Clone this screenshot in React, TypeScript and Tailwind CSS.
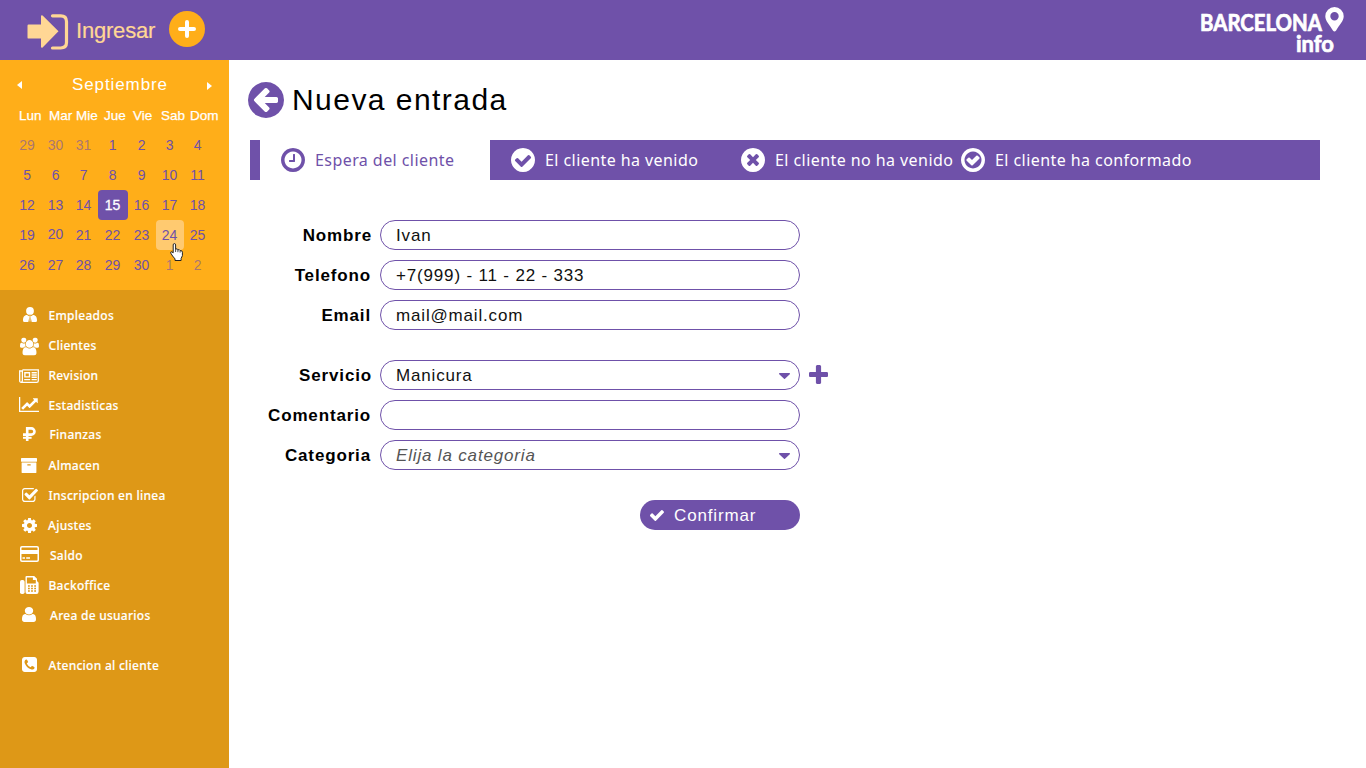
import type { ReactNode } from "react";

type GlyphProps = { d: string; box: string; className: string };

const Glyph = ({ d, box, className }: GlyphProps) => (
  <svg viewBox={box} className={`shrink-0 ${className}`} fill="currentColor" preserveAspectRatio="none" aria-hidden="true">
    <path d={d} />
  </svg>
);

const DISC = "q0 209-103 385.5t-279.5 279.5-385.5 103-385.5-103-279.5-279.5-103-385.5 103-385.5 279.5-279.5 385.5-103 385.5 103 279.5 279.5 103 385.5z";
const RING = "q0-148-73-273t-198-198-273-73-273 73-198 198-73 273 73 273 198 198 273 73 273-73 198-198 73-273zm224 0" + DISC;
const ROUND_BOX = "128 128 1536 1536";

const paths = {
  arrowLeft: "M1408 960v-128q0-26-19-45t-45-19h-502l189-189q19-19 19-45t-19-45l-91-91q-18-18-45-18t-45 18l-362 362-91 91q-18 18-18 45t18 45l91 91 362 362q18 18 45 18t45-18l91-91q18-18 18-45t-18-45l-189-189h502q26 0 45-19t19-45zm256-64" + DISC,
  clock: "M1024 544v448q0 14-9 23t-23 9h-320q-14 0-23-9t-9-23v-64q0-14 9-23t23-9h224v-352q0-14 9-23t23-9h64q14 0 23 9t9 23zm416 352" + RING,
  checkCircle: "M1412 734q0-28-18-46l-91-90q-19-19-45-19t-45 19l-408 407-226-226q-19-19-45-19t-45 19l-91 90q-18 18-18 46 0 27 18 45l362 362q19 19 45 19 27 0 46-19l543-543q18-18 18-45zm252 162" + DISC,
  timesCircle: "M1277 1122q0-26-19-45l-181-181 181-181q19-19 19-45 0-27-19-46l-90-90q-19-19-46-19-26 0-45 19l-181 181-181-181q-19-19-45-19-27 0-46 19l-90 90q-19 19-19 46 0 26 19 45l181 181-181 181q-19 19-19 45 0 27 19 46l90 90q19 19 46 19 26 0 45-19l181-181 181 181q19 19 45 19 27 0 46-19l90-90q19-19 19-46zm387-226" + DISC,
  checkRing: "M1299 813l-422 422q-19 19-45 19t-45-19l-294-294q-19-19-19-45t19-45l102-102q19-19 45-19t45 19l147 147 275-275q19-19 45-19t45 19l102 102q19 19 19 45t-19 45zm141 83" + RING,
  caretDown: "M1408 704q0 26-19 45l-448 448q-19 19-45 19t-45-19l-448-448q-19-19-19-45t19-45 45-19h896q26 0 45 19t19 45z",
  plus: "M1600 736v192q0 40-28 68t-68 28h-416v416q0 40-28 68t-68 28h-192q-40 0-68-28t-28-68v-416h-416q-40 0-68-28t-28-68v-192q0-40 28-68t68-28h416v-416q0-40 28-68t68-28h192q40 0 68 28t28 68v416h416q40 0 68 28t28 68z",
  check: "M1671 566q0 40-28 68l-724 724-136 136q-28 28-68 28t-68-28l-136-136-362-362q-28-28-28-68t28-68l136-136q28-28 68-28t68 28l294 295 656-657q28-28 68-28t68 28l136 136q28 28 28 68z",
  users: "M657 896q-162 5-265 128h-134q-82 0-138-40.5t-56-118.5q0-353 124-353 6 0 43.5 21t97.5 42.5 119 21.5q67 0 133-23-5 37-5 66 0 139 81 256zm1071 637q0 120-73 189.5t-194 69.5h-874q-121 0-194-69.5t-73-189.5q0-53 3.5-103.5t14-109 26.5-108.5 43-97.5 62-81 85.5-53.5 111.5-20q10 0 43 21.5t73 48 107 48 135 21.5 135-21.5 107-48 73-48 43-21.5q61 0 111.5 20t85.5 53.5 62 81 43 97.5 26.5 108.5 14 109 3.5 103.5zm-1024-1277q0 106-75 181t-181 75-181-75-75-181 75-181 181-75 181 75 75 181zm704 384q0 159-112.5 271.5t-271.5 112.5-271.5-112.5-112.5-271.5 112.5-271.5 271.5-112.5 271.5 112.5 112.5 271.5zm576 225q0 78-56 118.5t-138 40.5h-134q-103-123-265-128 81-117 81-256 0-29-5-66 66 23 133 23 59 0 119-21.5t97.5-42.5 43.5-21q124 0 124 353zm-128-609q0 106-75 181t-181 75-181-75-75-181 75-181 181-75 181 75 75 181z",
  chart: "M2048 1536v128h-2048v-1536h128v1408h1920zm-128-1248v435q0 21-19.5 29.5t-35.5-7.5l-121-121-633 633q-10 10-23 10t-23-10l-233-233-416 416-192-192 585-585q10-10 23-10t23 10l233 233 464-464-121-121q-16-16-7.5-35.5t29.5-19.5h435q14 0 23 9t9 23z",
  archive: "M1088 832q0-26-19-45t-45-19h-256q-26 0-45 19t-19 45 19 45 45 19h256q26 0 45-19t19-45zm576-192v960q0 26-19 45t-45 19h-1408q-26 0-45-19t-19-45v-960q0-26 19-45t45-19h1408q26 0 45 19t19 45zm64-448v256q0 26-19 45t-45 19h-1536q-26 0-45-19t-19-45v-256q0-26 19-45t45-19h1536q26 0 45 19t19 45z",
  checkSquare: "M1472 930v318q0 119-84.5 203.5t-203.5 84.5h-832q-119 0-203.5-84.5t-84.5-203.5v-832q0-119 84.5-203.5t203.5-84.5h832q63 0 117 25 15 7 18 23 3 17-9 29l-49 49q-10 10-23 10-3 0-9-2-23-6-45-6h-832q-66 0-113 47t-47 113v832q0 66 47 113t113 47h832q66 0 113-47t47-113v-254q0-13 9-22l64-64q10-10 23-10 6 0 12 3 20 8 20 29zm231-489l-814 814q-24 24-57 24t-57-24l-430-430q-24-24-24-57t24-57l110-110q24-24 57-24t57 24l263 263 647-647q24-24 57-24t57 24l110 110q24 24 24 57t-24 57z",
  cog: "M1152 896q0-106-75-181t-181-75-181 75-75 181 75 181 181 75 181-75 75-181zm512-109v222q0 12-8 23t-20 13l-185 28q-19 54-39 91 35 50 107 138 10 12 10 25t-9 23q-27 37-99 108t-94 71q-12 0-26-9l-138-108q-44 23-91 38-16 136-29 186-7 28-36 28h-222q-14 0-24.5-8.5t-11.5-21.5l-28-184q-49-16-90-37l-141 107q-10 9-25 9-14 0-25-11-126-114-165-168-7-10-7-23 0-12 8-23 15-21 51-66.5t54-70.5q-27-50-41-99l-183-27q-13-2-21-12.5t-8-23.5v-222q0-12 8-23t19-13l186-28q14-46 39-92-40-57-107-138-10-12-10-24 0-10 9-23 26-36 98.5-107.5t94.5-71.5q13 0 26 10l138 107q44-23 91-38 16-136 29-186 7-28 36-28h222q14 0 24.5 8.5t11.5 21.5l28 184q49 16 90 37l142-107q9-9 24-9 13 0 25 10 129 119 165 170 7 8 7 22 0 12-8 23-15 21-51 66.5t-54 70.5q26 50 41 98l183 28q13 2 21 12.5t8 23.5z",
  user: "M1536 1399q0 109-62.5 187t-150.5 78h-854q-88 0-150.5-78t-62.5-187q0-85 8.5-160.5t31.5-152 58.5-131 94-89 134.5-34.5q131 128 313 128t313-128q76 0 134.5 34.5t94 89 58.5 131 31.5 152 8.5 160.5zm-256-887q0 159-112.5 271.5t-271.5 112.5-271.5-112.5-112.5-271.5 112.5-271.5 271.5-112.5 271.5 112.5 112.5 271.5z",
  phone: "M1408 1193q0-11-2-16t-18-16.5-40.5-25-47.5-26.5-45.5-25-28.5-15q-5-3-19-13t-25-15-21-5q-15 0-36.5 20.5t-39.5 45-38.5 45-33.5 20.5q-7 0-16.5-3.5t-15.5-6.5-17-9.5-14-8.5q-99-55-170-126.5t-127-170.5q-2-3-8.5-14t-9.5-17-6.5-15.5-3.5-16.5q0-13 20.5-33.5t45-38.5 45-39.5 20.5-36.5q0-10-5-21t-15-25-13-19q-3-6-15-28.5t-25-45.5-26.5-47.5-25-40.5-16.5-18-16-2q-48 0-101 22-46 21-80 94.5t-34 130.5q0 16 2.5 34t5 30.5 9 33 10 29.5 12.5 33 11 30q60 164 216.5 320.5t320.5 216.5q6 2 30 11t33 12.5 29.5 10 33 9 30.5 5 34 2.5q57 0 130.5-34t94.5-80q22-53 22-101zm256-777v960q0 119-84.5 203.5t-203.5 84.5h-960q-119 0-203.5-84.5t-84.5-203.5v-960q0-119 84.5-203.5t203.5-84.5h960q119 0 203.5 84.5t84.5 203.5z",
};

const Employee = () => (
  <svg viewBox="0 0 14 15" className="ml-px h-[15px] w-[14px] -translate-y-px" fill="currentColor" aria-hidden="true">
    <circle cx="7" cy="3.9" r="3.9" />
    <path d="M4 8 6.5 9.6 5.3 15H1.4Q0 15 0 13.4C0 10.4 1.2 8 4 8zM10 8 7.5 9.6 8.7 15h3.9q1.4 0 1.4-1.6C14 10.4 12.8 8 10 8z" />
    <path d="M6.2 8.6h1.6L7.6 14l-.6 1-.6-1z" opacity=".6" />
  </svg>
);

const Newspaper = () => (
  <svg viewBox="0 0 20 14" className="h-[14px] w-5 translate-y-px" fill="none" stroke="currentColor" aria-hidden="true">
    <path strokeWidth="1.3" d="M3.4.8h15.9v10.9q0 1.6-1.6 1.6H2.3Q.7 13.3.7 11.7V2h2.7v9.7q0 1.4-1.3 1.5" />
    <path strokeWidth="1.4" d="M5.9 3.7h4.6v4.2H5.9zM5.2 10.6h6M12.6 3.7h5.2M12.6 6h5.2M12.6 8.3h5.2M12.6 10.6h5.2" />
  </svg>
);

const Ruble = () => (
  <svg viewBox="0 0 13 14" className="ml-px h-[14px] w-[13px] -translate-y-px" fill="none" stroke="currentColor" aria-hidden="true">
    <path strokeWidth="2.6" d="M4.2 14V1.4h4.2a3 3 0 0 1 0 6.2H0" />
    <path strokeWidth="2" d="M0 10.8h8.6" />
  </svg>
);

const Card = () => (
  <svg viewBox="0 0 19 16" className="h-4 w-[19px] -translate-y-px" fill="currentColor" aria-hidden="true">
    <rect x=".75" y=".75" width="17.5" height="14.5" rx="1.2" fill="none" stroke="currentColor" strokeWidth="1.5" />
    <path d="M1 4h17v4H1zM2.5 11.3H5v1.5H2.5zM6.2 11.3H10v1.5H6.2z" />
  </svg>
);

const Fax = () => (
  <svg viewBox="0 0 19 18" className="h-[18px] w-[19px]" fill="currentColor" aria-hidden="true">
    <rect x="0" y="4" width="4.6" height="14" rx="1.8" />
    <path
      fillRule="evenodd"
      d="M5.5 1q0-1 1-1h7.7L17 2.8v2.4q1.6.5 1.6 2v8.3q0 2.5-2.2 2.5h-9q-1.9 0-1.9-2zM6.9 1.4v6h8.9V4.1h-2.9V1.4zM8 9.2v1.5h1.8V9.2zM11.1 9.2v1.5h1.8V9.2zM14.2 9.2v1.5H16V9.2zM8 11.8v1.5h1.8v-1.5zM11.1 11.8v1.5h1.8v-1.5zM14.2 11.8v1.5H16v-1.5zM8 14.3v1.5h1.8v-1.5zM11.1 14.3v1.5h1.8v-1.5zM14.2 14.3v1.5H16v-1.5z"
    />
  </svg>
);

type MenuItem = { label: string; icon: ReactNode; text: string; row?: string };

const menu: MenuItem[] = [
  { label: "Empleados", icon: <Employee />, text: "pl-[9.5px] pt-[2px]" },
  { label: "Clientes", icon: <Glyph d={paths.users} box="64 0 1920 1792" className="h-[18px] w-[19px] translate-y-[1.5px]" />, text: "pl-[9.5px] pt-[2px]" },
  { label: "Revision", icon: <Newspaper />, text: "pl-[9.5px] pt-[2px]" },
  { label: "Estadisticas", icon: <Glyph d={paths.chart} box="0 128 2048 1536" className="h-[15px] w-5 -translate-y-px" />, text: "pl-[9.5px] pt-[2px]" },
  { label: "Finanzas", icon: <Ruble />, text: "pl-[10.5px]" },
  { label: "Almacen", icon: <Glyph d={paths.archive} box="64 128 1664 1536" className="h-[15px] w-4" />, text: "pl-[9.5px] pt-[2px]" },
  { label: "Inscripcion en linea", icon: <Glyph d={paths.checkSquare} box="64 128 1664 1408" className="ml-[2px] h-[14px] w-4" />, text: "pl-[9.5px] pt-[2px]" },
  { label: "Ajustes", icon: <Glyph d={paths.cog} box={ROUND_BOX} className="ml-px h-[15px] w-[15px]" />, text: "pl-[9px] pt-[2px]" },
  { label: "Saldo", icon: <Card />, text: "pl-[11px] pt-[2px]" },
  { label: "Backoffice", icon: <Fax />, text: "pl-[9.5px] pt-[2px]" },
  { label: "Area de usuarios", icon: <Glyph d={paths.user} box="256 128 1280 1536" className="h-[15px] w-[14px] -translate-y-px" />, text: "pl-[11px] pt-[2px]" },
  { label: "Atencion al cliente", icon: <Glyph d={paths.phone} box={ROUND_BOX} className="h-[15px] w-[15px] -translate-y-px" />, text: "pl-[9.5px] pt-[2px]", row: "mt-5" },
];

const weeks = [
  [29, 30, 31, 1, 2, 3, 4],
  [5, 6, 7, 8, 9, 10, 11],
  [12, 13, 14, 15, 16, 17, 18],
  [19, 20, 21, 22, 23, 24, 25],
  [26, 27, 28, 29, 30, 1, 2],
];

function dayStyle(day: number, week: number) {
  if (day === 15) return "rounded bg-[#6f51a9] pt-px text-white [-webkit-text-stroke:0.3px_white]";
  if (day === 24) return "rounded bg-[#ffca70] pt-px text-[#6f51a9]";
  if (day === 20) return "pb-px text-[#6f51a9]";
  if ((week === 0 && day > 20) || (week === 4 && day < 10)) return "pt-px text-[#6f51a9]/60";
  return "pt-px text-[#6f51a9]";
}

const Pointer = () => (
  <svg viewBox="0 0 14 18" className="absolute top-[243px] left-[170px] h-[18px] w-[14px]" aria-hidden="true">
    <path
      d="M3.2 9.8V1.9Q3.2.6 4.4.6t1.2 1.3V6q2-.6 2.3.8 1.7-.6 2.2.8 2.2-.4 2.3 1.6v3.5l-1.3 2.8v2H5v-1.6L2.6 13 .8 10.2Q.4 8.7 1.6 8.7z"
      fill="#fff"
      stroke="#222"
      strokeWidth="1"
    />
    <path d="M5.6 6v3M7.9 7v2.2M10.1 7.8v1.8" stroke="#222" strokeWidth=".8" />
  </svg>
);

const Header = () => (
  <header className="flex h-[60px] shrink-0 items-center bg-[#6f51a9]">
    <svg viewBox="0 0 42 36" className="mt-[3px] ml-[27px] h-9 w-[42px]" aria-hidden="true">
      <path d="M1.6 10.5H14V2q.3-1.4 1.6-.5L31.5 17.3 15.6 33.4q-1.3.8-1.6-.6v-8.2H1.6Q.5 24.6.5 23.4V11.8q0-1.3 1.1-1.3z" fill="#ffd795" />
      <path d="M25.5 1.8h8.2q5.8 0 5.8 5.8v21q0 5.4-5.8 5.4h-8.2" fill="none" stroke="#ffd795" strokeWidth="3.2" strokeLinecap="round" />
    </svg>
    <span className="ml-[7px] w-[93px] text-[22px] tracking-[-0.2px] text-[#ffd795] [-webkit-text-stroke:0.2px_#ffd795]">Ingresar</span>
    <button className="-mt-[2px] flex h-9 w-9 items-center justify-center rounded-full bg-[#ffae19] text-white">
      <svg viewBox="0 0 18 18" className="h-[18px] w-[18px]" stroke="currentColor" strokeWidth="4" strokeLinecap="round" aria-hidden="true">
        <path d="M9 2v14M2 9h14" />
      </svg>
    </button>
    <svg viewBox="0 0 150 60" className="ml-auto mr-[16px] h-[60px] w-[150px]" fill="#fff" aria-label="BARCELONA info">
      <text fontFamily="Lato, sans-serif" fontWeight="700" fontSize="22" stroke="#fff" strokeWidth="0.7" strokeLinejoin="round">
        <tspan x="0" y="30.5" textLength="122" lengthAdjust="spacingAndGlyphs">BARCELONA</tspan>
        <tspan x="96" y="51.5" textLength="38" lengthAdjust="spacingAndGlyphs">info</tspan>
      </text>
      <path fillRule="evenodd" d="M134.5 7a9.2 9.2 0 0 1 9.2 9.2c0 5-4.4 8.4-7.6 14.2q-1.6 2-3.2 0c-3.2-5.8-7.6-9.2-7.6-14.2A9.2 9.2 0 0 1 134.5 7zM134.5 12a4.2 4.2 0 1 0 0 8.4 4.2 4.2 0 0 0 0-8.4z" />
    </svg>
  </header>
);

const Calendar = () => (
  <section className="h-[230px] bg-[#ffae19] text-[14px]">
    <div className="flex h-[50px] items-center pl-[17px] text-white">
      <svg viewBox="0 0 5 8" className="-mt-px h-2 w-[5px]" fill="currentColor" aria-hidden="true"><path d="M5 0v8L0 4z" /></svg>
      <span className="ml-[50px] w-[135px] text-[17px] tracking-[0.9px]">Septiembre</span>
      <svg viewBox="0 0 5 8" className="mt-px h-2 w-[5px]" fill="currentColor" aria-hidden="true"><path d="M0 0v8l5-4z" /></svg>
    </div>
    <div className="-mt-[9px] flex h-[30px] items-center pl-[19px] text-[13.5px] text-white [-webkit-text-stroke:0.25px_white]">
      <span className="w-[30px]">Lun</span>
      <span className="w-[27px]">Mar</span>
      <span className="w-[28px]">Mie</span>
      <span className="w-[29px]">Jue</span>
      <span className="w-[28px]">Vie</span>
      <span className="w-[29px]">Sab</span>
      <span>Dom</span>
    </div>
    <div className="-mt-px grid grid-cols-[29px_28px_28px_30px_28px_28px_28px] pl-[13px]">
      {weeks.flatMap((week, w) =>
        week.map((day, i) => (
          <span key={`${w}-${i}`} className={`flex h-[30px] items-center justify-center pr-px tracking-[-0.1px] ${dayStyle(day, w)}`}>
            {day}
          </span>
        )),
      )}
    </div>
  </section>
);

const tabs = [
  { label: "El cliente ha venido", d: paths.checkCircle, width: "w-[230px]" },
  { label: "El cliente no ha venido", d: paths.timesCircle, width: "w-[220px]" },
  { label: "El cliente ha conformado", d: paths.checkRing, width: "w-[360px]" },
];

type FieldProps = { label: string; labelPad?: string; children?: ReactNode; select?: boolean; className?: string; after?: ReactNode };

const Field = ({ label, labelPad = "pr-[9px]", children, select, className = "", after }: FieldProps) => (
  <div className={`flex h-[30px] items-center ${className}`}>
    <span className={`w-[130px] pt-[2px] text-right text-[17px] font-bold tracking-[0.85px] text-black ${labelPad}`}>{label}</span>
    <div className="flex h-[30px] w-[420px] items-center rounded-full border border-[#6f51a9] pr-[9px] pl-[15px] text-[17px] tracking-[0.83px] text-[#111]">
      <span className="pt-[2px]">{children}</span>
      {select && <Glyph d={paths.caretDown} box="384 640 1024 576" className="mt-[2px] ml-auto h-[6px] w-[11px] text-[#6f51a9]" />}
    </div>
    {after}
  </div>
);

export default function App() {
  return (
    <div className="relative flex h-[768px] w-[1366px] flex-col overflow-hidden bg-white font-['Liberation_Sans',Arial,sans-serif]">
      <Header />
      <div className="flex grow">
        <aside className="flex w-[229px] shrink-0 flex-col bg-[#de9817]">
          <Calendar />
          <nav className="flex flex-col pt-[10px] pl-[19px] font-['Noto_Sans',sans-serif] text-[12px] font-medium text-white">
            {menu.map((item) => (
              <a key={item.label} className={`flex h-[30px] items-center ${item.row ?? ""}`}>
                <span className="flex w-5 justify-center">{item.icon}</span>
                <span className={`tracking-[0.27px] [-webkit-text-stroke:0.15px_white] ${item.text}`}>{item.label}</span>
              </a>
            ))}
          </nav>
        </aside>
        <main className="flex grow flex-col pl-[19px]">
          <h1 className="mt-[20px] flex h-10 items-center text-[30px] tracking-[1.45px] text-black">
            <Glyph d={paths.arrowLeft} box={ROUND_BOX} className="h-9 w-9 text-[#6f51a9]" />
            <span className="pb-[2px] pl-[8px]">Nueva entrada</span>
          </h1>
          <div className="mt-5 ml-[2px] flex h-10 w-[1070px] bg-[#6f51a9] pl-[10px] font-['Noto_Sans',sans-serif] text-[16px] tracking-[0.43px] text-white">
            <div className="flex w-[230px] items-center bg-white pl-[21px] text-[#6f51a9]">
              <Glyph d={paths.clock} box={ROUND_BOX} className="mr-[10px] h-6 w-6" />
              Espera del cliente
            </div>
            {tabs.map((tab) => (
              <div key={tab.label} className={`flex items-center whitespace-nowrap pl-[21px] ${tab.width}`}>
                <Glyph d={tab.d} box={ROUND_BOX} className="mr-[10px] h-6 w-6" />
                {tab.label}
              </div>
            ))}
          </div>
          <form className="mt-10 ml-[2px] flex flex-col gap-[10px]">
            <Field label="Nombre" labelPad="pr-[8px]">Ivan</Field>
            <Field label="Telefono">+7(999) - 11 - 22 - 333</Field>
            <Field label="Email">mail@mail.com</Field>
            <Field
              label="Servicio"
              labelPad="pr-[8px]"
              select
              className="mt-5"
              after={<Glyph d={paths.plus} box="192 128 1408 1408" className="ml-[9px] h-[19px] w-[19px] -translate-y-px text-[#6f51a9]" />}
            >
              Manicura
            </Field>
            <Field label="Comentario" />
            <Field label="Categoria" select>
              <span className="text-[#555] italic">Elija la categoria</span>
            </Field>
            <button type="button" className="mt-5 ml-[390px] flex h-[30px] w-40 items-center rounded-full bg-[#6f51a9] pl-[10px] text-[17px] tracking-[0.85px] text-white">
              <Glyph d={paths.check} box="121 334 1550 1188" className="mt-px mr-[10px] h-[11px] w-[14px]" />
              <span className="pt-[2px]">Confirmar</span>
            </button>
          </form>
        </main>
      </div>
      <Pointer />
    </div>
  );
}
